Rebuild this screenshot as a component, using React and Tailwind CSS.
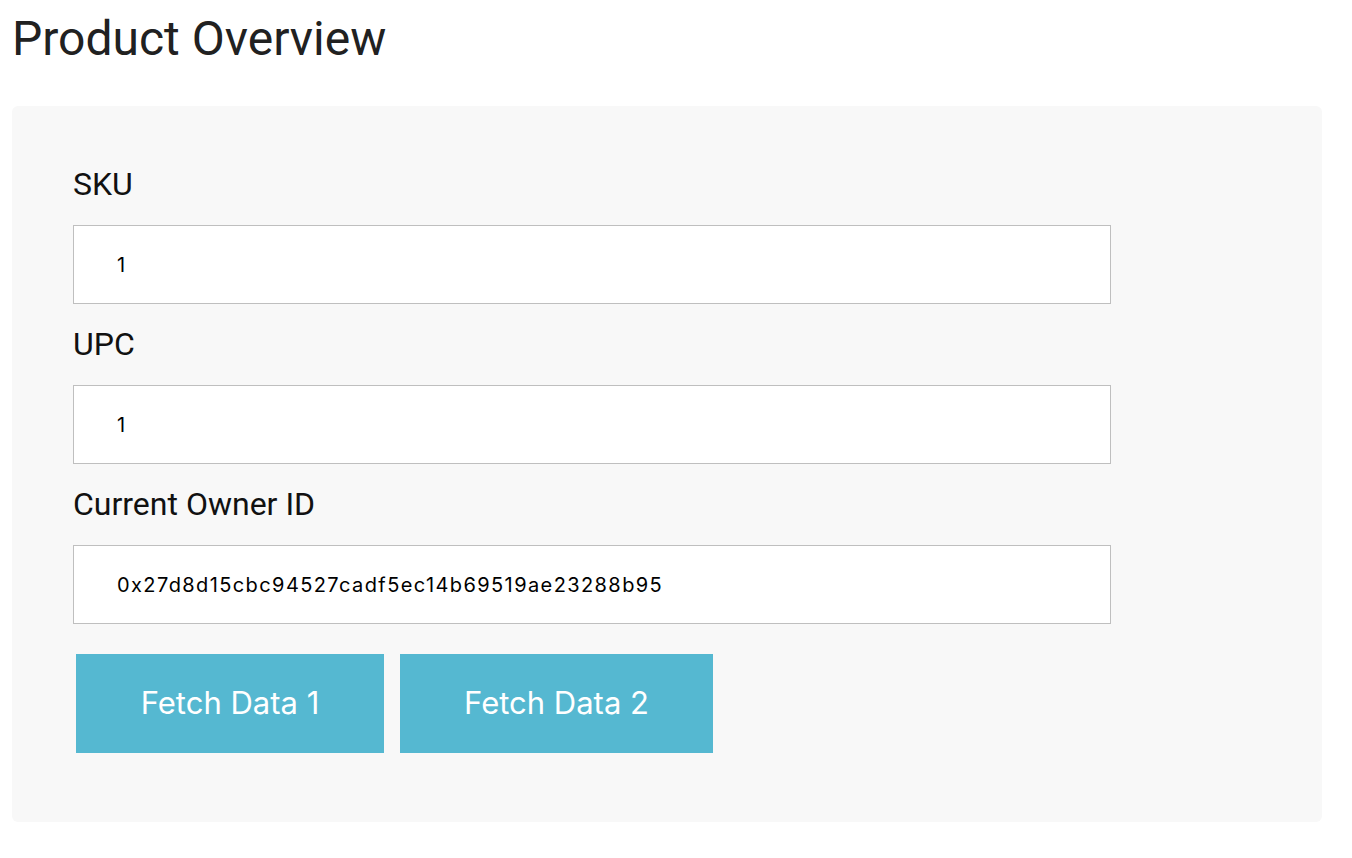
export default function App() {
  const fields = [
    { label: 'SKU', value: '1' },
    { label: 'UPC', value: '1' },
    { label: 'Current Owner ID', value: '0x27d8d15cbc94527cadf5ec14b69519ae23288b95' },
  ];

  return (
    <div className="min-h-screen bg-white px-[12px] pt-[15px] font-['Roboto',sans-serif]">
      <h1 className="text-[48px] leading-none font-normal text-[#212121]">Product Overview</h1>

      <div className="mt-[43px] w-[1310px] rounded-[6px] bg-[#f8f8f8] pl-[61px] pt-[63px] pb-[69px]">
        {fields.map((f) => (
          <div key={f.label} className="mb-[25px]">
            <label className="block text-[32px] leading-[31px] text-[#111]">{f.label}</label>
            <input
              readOnly
              value={f.value}
              className="mt-[25px] block h-[79px] w-[1038px] border border-[#bfbfbf] bg-white pl-[43px] text-[20px] tracking-[1.4px] text-black font-['Inter',sans-serif] outline-none"
            />
          </div>
        ))}

        <div className="mt-[30px] ml-[3px] flex gap-[16px] font-['Inter',sans-serif]">
          <button className="h-[99px] w-[308px] bg-[#55b8d1] text-[31px] text-white">Fetch Data 1</button>
          <button className="h-[99px] w-[313px] bg-[#55b8d1] text-[31px] text-white">Fetch Data 2</button>
        </div>
      </div>
    </div>
  );
}
